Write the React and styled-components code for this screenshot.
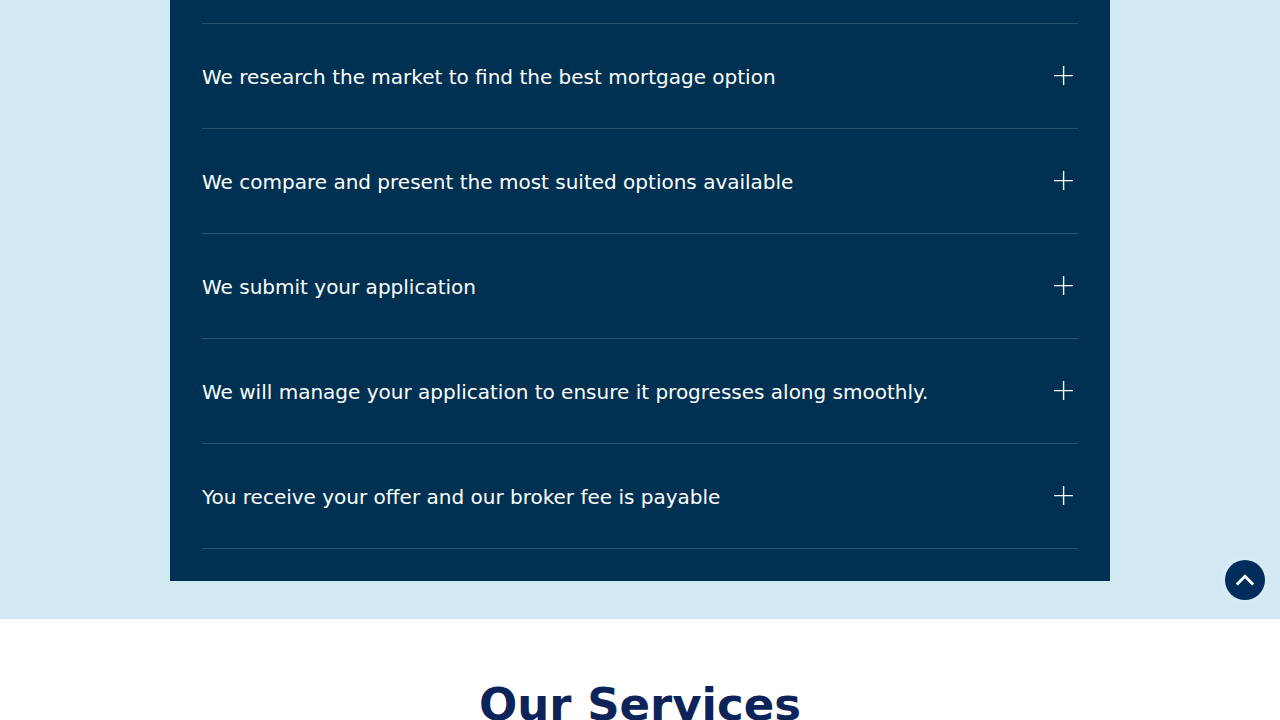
import React, { useState } from "react";
import styled, { createGlobalStyle } from "styled-components";

const GlobalStyle = createGlobalStyle`
  body {
    margin: 0;
    background: #ffffff;
    font-family: Verdana, "DejaVu Sans", sans-serif;
  }
`;

const Page = styled.div`
  height: 100vh;
  overflow: hidden;
`;

const ProcessSection = styled.section`
  background: #d1e9f3;
  padding: 0 24px 38px;
`;

const Panel = styled.div`
  box-sizing: border-box;
  max-width: 940px;
  margin: 0 auto;
  padding: 23px 32px 32px;
  background: #003153;
`;

const StepList = styled.ul`
  list-style: none;
  margin: 0;
  padding: 0;
  border-top: 1px solid #2b526f;
`;

const Step = styled.li`
  border-bottom: 1px solid #2b526f;
  h3 {
    margin: 0;
    font-weight: 400;
  }
`;

const StepButton = styled.button`
  display: flex;
  align-items: flex-start;
  justify-content: space-between;
  width: 100%;
  padding: 37px 4px 35px 0;
  border: none;
  background: none;
  color: #ffffff;
  font-family: inherit;
  font-size: 20px;
  line-height: 32px;
  text-align: left;
  cursor: pointer;
`;

const PlusIcon = styled.svg`
  flex: none;
  width: 21px;
  height: 21px;
  margin-top: 4px;
  stroke: #ffffff;
  stroke-width: 1.4;
`;

const ServicesSection = styled.section`
  padding: 56px 24px;
  text-align: center;
  h2 {
    margin: 0;
    color: #0c2459;
    font-size: 45px;
    line-height: 60px;
    font-weight: 700;
  }
`;

const TopButton = styled.button`
  position: fixed;
  right: 15px;
  bottom: 120px;
  display: flex;
  align-items: center;
  justify-content: center;
  width: 40px;
  height: 40px;
  padding: 0;
  border: none;
  border-radius: 50%;
  background: #002d5b;
  box-shadow: 0 0 6px 2px rgba(222, 238, 252, 0.8);
  cursor: pointer;
`;

const steps = [
  "We research the market to find the best mortgage option",
  "We compare and present the most suited options available",
  "We submit your application",
  "We will manage your application to ensure it progresses along smoothly.",
  "You receive your offer and our broker fee is payable",
];

export default function App() {
  const [open, setOpen] = useState(null);

  return (
    <Page>
      <GlobalStyle />
      <ProcessSection>
        <Panel>
          <StepList>
            {steps.map((title, i) => (
              <Step key={title}>
                <h3>
                  <StepButton
                    aria-expanded={open === i}
                    onClick={() => setOpen(open === i ? null : i)}
                  >
                    {title}
                    <PlusIcon viewBox="0 0 21 21" aria-hidden="true">
                      <path d={open === i ? "M1 10.6H20" : "M1 10.6H20M10.6 1V20"} />
                    </PlusIcon>
                  </StepButton>
                </h3>
              </Step>
            ))}
          </StepList>
        </Panel>
      </ProcessSection>
      <ServicesSection>
        <h2>Our Services</h2>
      </ServicesSection>
      <TopButton
        aria-label="Back to top"
        onClick={() => window.scrollTo({ top: 0, behavior: "smooth" })}
      >
        <svg width="20" height="20" viewBox="0 0 20 20" fill="none" stroke="#ffffff" strokeWidth="2.8">
          <path d="M1.8 14.6L10 6.3L18.2 14.6" />
        </svg>
      </TopButton>
    </Page>
  );
}
